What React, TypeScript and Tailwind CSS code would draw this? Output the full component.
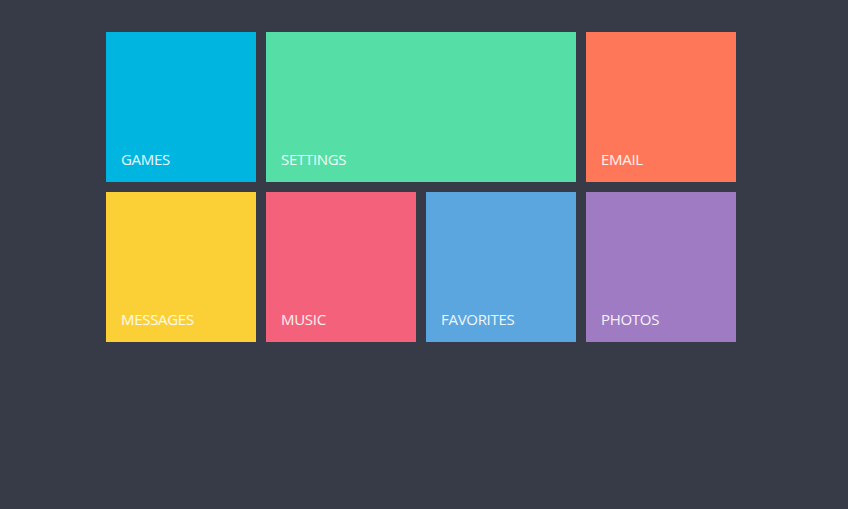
const tiles = [
  { label: "GAMES", color: "bg-[#00b5e0]", wide: false },
  { label: "SETTINGS", color: "bg-[#55dfa7]", wide: true },
  { label: "EMAIL", color: "bg-[#ff7759]", wide: false },
  { label: "MESSAGES", color: "bg-[#fbd036]", wide: false },
  { label: "MUSIC", color: "bg-[#f3627a]", wide: false },
  { label: "FAVORITES", color: "bg-[#5ca6df]", wide: false },
  { label: "PHOTOS", color: "bg-[#9e7bc3]", wide: false },
];

export default function App() {
  return (
    <div className="min-h-[509px] w-full bg-[#373b47] pt-[32px] pl-[106px]" style={{ fontFamily: "'Open Sans', 'Noto Sans', sans-serif" }}>
      <div className="grid grid-cols-[repeat(4,150px)] auto-rows-[150px] gap-[10px]">
        {tiles.map((t) => (
          <div
            key={t.label}
            className={`${t.color} ${t.wide ? "col-span-2" : ""} flex items-end px-[15px] pb-[13px]`}
          >
            <span className="text-[15px] leading-[20px] text-white/90 tracking-[-0.3px]">{t.label}</span>
          </div>
        ))}
      </div>
    </div>
  );
}
